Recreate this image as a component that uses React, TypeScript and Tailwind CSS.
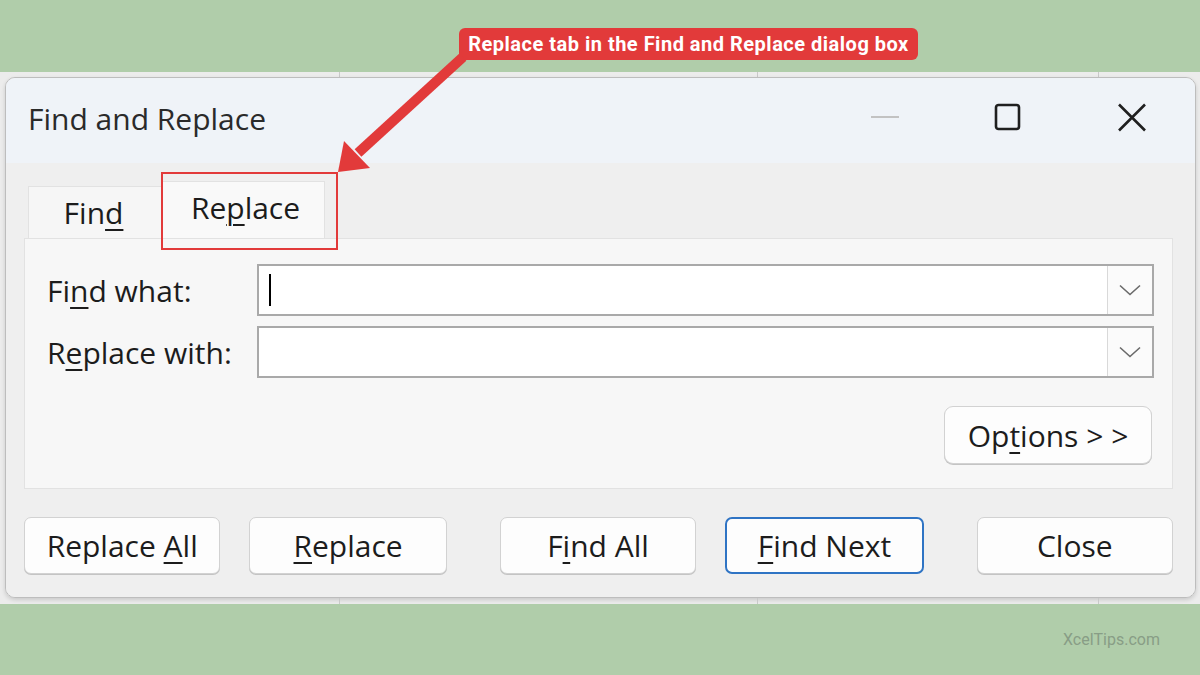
import React from "react";

const ink = "text-[#1c1c1c]";

function U({ children }: { children: React.ReactNode }) {
  return <span className="underline decoration-[2px] underline-offset-[5px]">{children}</span>;
}

function Chevron() {
  return (
    <svg width="22" height="12" viewBox="0 0 22 12" fill="none">
      <path d="M1 1.5 L11 10.5 L21 1.5" stroke="#6a6a6a" strokeWidth="1.6" />
    </svg>
  );
}

function ComboBox({ caret }: { caret?: boolean }) {
  return (
    <div className="flex-1 h-[52px] flex border-2 border-[#a9a9a9] bg-white">
      <div className="flex-1 flex items-center pl-[10px]">
        {caret && <div className="w-[2px] h-[32px] bg-black" />}
      </div>
      <div className="w-[45px] flex items-center justify-center bg-[#fbfbfb] border-l border-[#d9d9d9]">
        <Chevron />
      </div>
    </div>
  );
}

function Btn({
  children,
  className = "",
  focused,
}: {
  children: React.ReactNode;
  className?: string;
  focused?: boolean;
}) {
  return (
    <button
      className={`h-[57px] rounded-[7px] bg-[#fdfdfd] text-[30px] ${ink} flex items-center justify-center ${
        focused
          ? "border-2 border-[#2f74c4]"
          : "border border-[#d2d2d2] shadow-[0_1px_0_#c4c4c4]"
      } ${className}`}
    >
      {children}
    </button>
  );
}

function GridStrip({ h }: { h: string }) {
  return (
    <div className={`${h} flex`}>
      <div className="w-[340px] border-r border-[#c9c9c9]" />
      <div className="w-[418px] border-r border-[#c9c9c9]" />
      <div className="w-[341px] border-r border-[#c9c9c9]" />
      <div className="flex-1" />
    </div>
  );
}

export default function App() {
  return (
    <div className="w-[1200px] h-[675px] bg-[#b0cdaa] relative overflow-hidden flex flex-col font-['Open_Sans',sans-serif]">
      <div className="h-[72px]" />

      {/* screenshot band */}
      <div className="h-[532px] bg-[#ececec] flex flex-col">
        <GridStrip h="h-[5px]" />
        <div className="h-[521px] flex">
          <div className="w-[5px]" />
          <div className="w-[1191px] rounded-[10px] border border-[#bdbdbd] overflow-hidden flex flex-col shadow-[0_2px_4px_rgba(0,0,0,0.15)]">
            {/* title bar */}
            <div className="h-[85px] bg-[#eff3f8] flex items-center pl-[22px]">
              <div className="text-[30px] text-[#2a2a2a] mb-[5px]">Find and Replace</div>
              <div className="flex-1" />
              <div className="w-[28px] h-[2px] bg-[#c2c2c2] mr-[95px] mb-[7px]" />
              <svg width="28" height="29" viewBox="0 0 28 29" className="mr-[95px] mb-[7px]">
                <rect x="2" y="2" width="23" height="24" rx="2.5" fill="none" stroke="#1f1f1f" strokeWidth="2.6" />
              </svg>
              <svg width="30" height="29" viewBox="0 0 30 29" className="mr-[48px] mb-[7px]">
                <path d="M2 1.5 L28 27.5 M28 1.5 L2 27.5" stroke="#1f1f1f" strokeWidth="2.6" />
              </svg>
            </div>

            {/* body */}
            <div className="flex-1 bg-[#efefef] pl-[18px] pr-[22px] pt-[18px] flex flex-col">
              {/* tabs */}
              <div className="flex items-end pl-[4px] h-[57px]">
                <div className={`w-[134px] h-[52px] bg-[#f6f6f6] border-t border-l border-[#e2e2e2] flex items-center justify-center text-[30px] ${ink} pr-[4px]`}>
                  <span>
                    Fin<U>d</U>
                  </span>
                </div>
                <div className={`w-[163px] h-[57px] bg-[#f9f9f9] border-t border-x border-[#e2e2e2] flex items-center justify-center text-[30px] ${ink} pb-[6px] pl-[4px]`}>
                  <span>
                    Re<U>p</U>lace
                  </span>
                </div>
              </div>

              {/* panel */}
              <div className="h-[251px] bg-[#f7f7f7] border border-[#e2e2e2] pl-[22px] pr-[18px] pt-[25px] flex flex-col">
                <div className="flex items-center">
                  <div className={`w-[210px] text-[30px] ${ink}`}>
                    Fi<U>n</U>d what:
                  </div>
                  <ComboBox caret />
                </div>
                <div className="flex items-center mt-[10px]">
                  <div className={`w-[210px] text-[30px] ${ink}`}>
                    R<U>e</U>place with:
                  </div>
                  <ComboBox />
                </div>
                <div className="flex justify-end mt-[28px] pr-[2px]">
                  <Btn className="w-[208px] h-[58px] rounded-[9px]">
                    <span>
                      Op<U>t</U>ions &gt; &gt;
                    </span>
                  </Btn>
                </div>
              </div>

              {/* buttons */}
              <div className="flex mt-[28px]">
                <Btn className="w-[197px]">
                  <span>
                    Replace <U>A</U>ll
                  </span>
                </Btn>
                <Btn className="w-[198px] ml-[29px]">
                  <span>
                    <U>R</U>eplace
                  </span>
                </Btn>
                <Btn className="w-[197px] ml-[53px]">
                  <span>
                    F<U>i</U>nd All
                  </span>
                </Btn>
                <Btn className="w-[199px] ml-[29px]" focused>
                  <span>
                    <U>F</U>ind Next
                  </span>
                </Btn>
                <Btn className="w-[197px] ml-[53px]">Close</Btn>
              </div>
            </div>
          </div>
        </div>
        <GridStrip h="h-[6px]" />
      </div>

      <div className="flex-1 flex items-center justify-end pr-[40px]">
        <span className="text-[16px] text-[#889d86] font-['Roboto',sans-serif]">XcelTips.com</span>
      </div>

      {/* annotation overlays */}
      <div className="absolute left-[459px] top-[28px] h-[32px] w-[459px] rounded-[6px] bg-[#e23a3a] flex items-center justify-center">
        <span className="text-white text-[20px] font-bold font-['Roboto',sans-serif] tracking-[0.5px]">
          Replace tab in the Find and Replace dialog box
        </span>
      </div>
      <svg className="absolute left-0 top-0 pointer-events-none" width="1200" height="675">
        <line x1="463" y1="57" x2="358" y2="153" stroke="#e23a3a" strokeWidth="10" />
        <polygon points="338,172 344,141 370,168" fill="#e23a3a" />
      </svg>
      <div className="absolute left-[161px] top-[172px] w-[177px] h-[78px] border-2 border-[#e23a3a]" />
    </div>
  );
}
